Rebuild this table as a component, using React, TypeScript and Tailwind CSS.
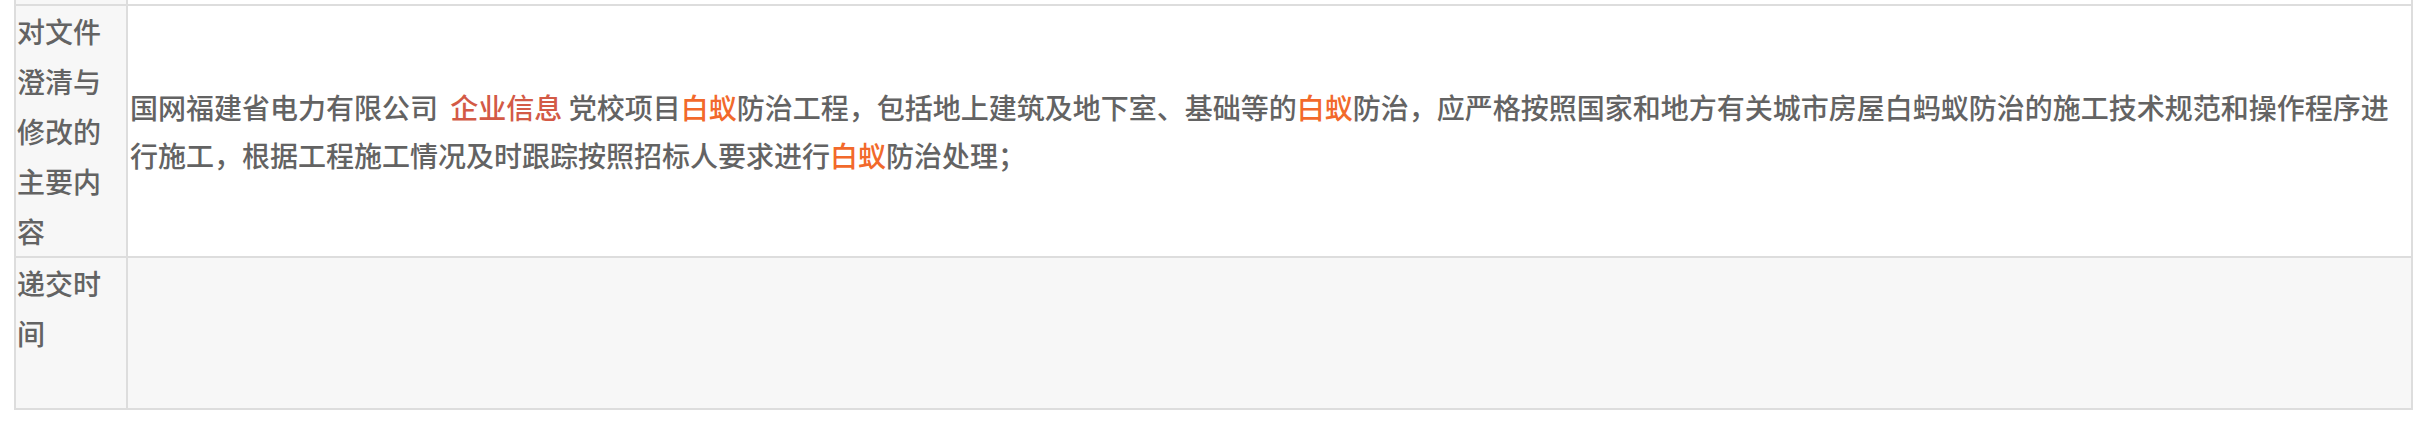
const FONT = "font-['Noto_Sans_CJK_SC','Noto_Sans',sans-serif]";

function Hl({ children }: { children: string }) {
  return <span className="text-[#f2692b]">{children}</span>;
}

export default function App() {
  return (
    <div className={`min-h-[436px] bg-white ${FONT} font-medium text-[#636363] text-[28px]`}>
      <div className="ml-[14px] w-[2399px] border-x-2 border-b-2 border-[#ddd]">
        {/* tail of the row above */}
        <div className="flex h-[4px]">
          <div className="w-[112px] shrink-0 border-r-2 border-[#ddd] bg-[#f7f7f7]" />
          <div className="flex-1 bg-white" />
        </div>

        <div className="flex border-t-2 border-[#ddd]">
          <div className="w-[112px] shrink-0 border-r-2 border-[#ddd] bg-[#f7f7f7] pl-[1px] leading-[50px]">
            对文件澄清与修改的主要内容
          </div>
          <div className="flex flex-1 items-center bg-white pl-[2px] pr-[2px] leading-[48px]">
            <p>
              国网福建省电力有限公司 <a className="ml-[6px] text-[#d35a46]">企业信息</a> 党校项目<Hl>白蚁</Hl>
              防治工程，包括地上建筑及地下室、基础等的<Hl>白蚁</Hl>防治，应严格按照国家和地方有关城市房屋白蚂蚁防治的施工技术规范和操作程序进行施工，根据工程施工情况及时跟踪按照招标人要求进行
              <Hl>白蚁</Hl>防治处理；
            </p>
          </div>
        </div>

        <div className="flex h-[152px] border-t-2 border-[#ddd] bg-[#f7f7f7]">
          <div className="w-[112px] shrink-0 border-r-2 border-[#ddd] pl-[1px] leading-[50px]">递交时间</div>
          <div className="flex-1" />
        </div>
      </div>
    </div>
  );
}
